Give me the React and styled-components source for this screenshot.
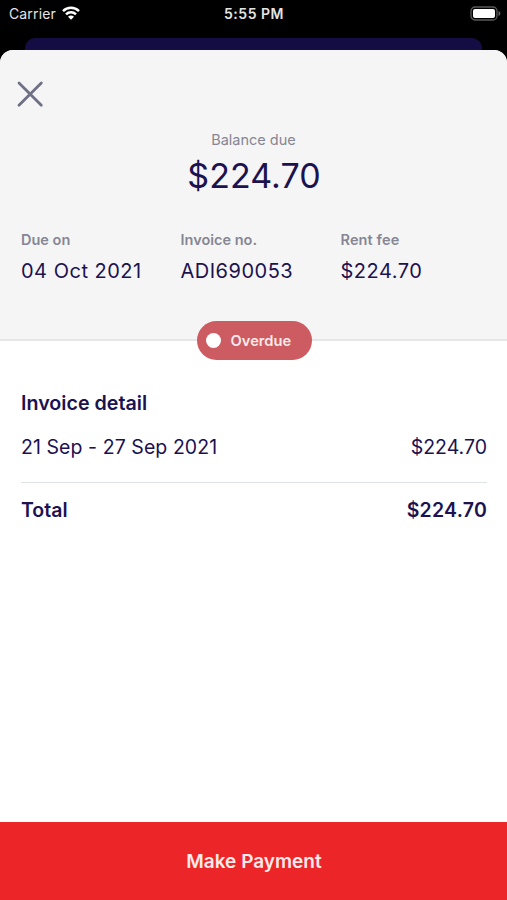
import React from "react";
import styled, { createGlobalStyle } from "styled-components";

const GlobalStyle = createGlobalStyle`
  * { box-sizing: border-box; }
  body {
    margin: 0;
    background: #000;
    font-family: Inter, "Liberation Sans", sans-serif;
    color: #1c1250;
  }
`;

const Screen = styled.div`
  display: flex;
  flex-direction: column;
  width: 507px;
  height: 900px;
  overflow: hidden;
  background: #000;
`;

const StatusBar = styled.header`
  display: grid;
  grid-template-columns: 1fr auto 1fr;
  align-items: center;
  height: 28px;
  padding: 0 6px 0 9px;
  font-size: 14px;
  line-height: 28px;
  color: #e4e4e4;
`;

const Carrier = styled.div`
  display: flex;
  align-items: center;
  gap: 6px;
  letter-spacing: 0.14px;

  svg {
    margin-top: -2px;
  }
`;

const Clock = styled.div`
  margin-right: 2px;
  font-weight: 600;
  letter-spacing: 0.5px;
`;

const Battery = styled.svg`
  justify-self: end;
  margin-top: -2px;
`;

const BackSheet = styled.div`
  flex: none;
  height: 12px;
  margin: 10px 25px 0;
  border-radius: 10px 10px 0 0;
  background: #140d44;
`;

const Sheet = styled.main`
  display: flex;
  flex: 1;
  flex-direction: column;
  overflow: hidden;
  border-radius: 13px 13px 0 0;
  background: #fff;
`;

const Summary = styled.section`
  display: flex;
  flex: none;
  flex-direction: column;
  height: 291px;
  background: #f5f5f5;
  border-bottom: 2px solid #e6e6e8;
`;

const CloseButton = styled.button`
  display: flex;
  width: 28px;
  height: 28px;
  margin: 30px 0 0 16px;
  padding: 0;
  border: 0;
  background: none;
`;

const Balance = styled.div`
  display: flex;
  flex-direction: column;
  align-items: center;
  margin-top: 22px;
`;

const Label = styled.div`
  font-size: 14.5px;
  line-height: 20px;
  font-weight: ${(p) => (p.$strong ? 600 : 400)};
  letter-spacing: ${(p) => p.$track || "0"};
  color: #868694;
`;

const Amount = styled.div`
  margin: 4px 0 0 1px;
  font-size: 34px;
  line-height: 44px;
  letter-spacing: 0.05px;
`;

const Facts = styled.div`
  display: grid;
  grid-template-columns: 159.5px 160px 1fr;
  margin: 32px 0 0 21px;
`;

const FactValue = styled.div`
  margin-top: 7px;
  font-size: 20px;
  line-height: 28px;
  letter-spacing: 0.5px;
`;

const Pill = styled.div`
  display: flex;
  flex: none;
  align-self: center;
  align-items: center;
  gap: 10px;
  width: 115px;
  height: 39px;
  margin: -20px 0 0 1px;
  padding-left: 9px;
  border-radius: 20px;
  background: #cc5c62;
  color: #fce9e9;
  font-size: 14.7px;
  font-weight: 600;
`;

const Dot = styled.span`
  width: 15px;
  height: 15px;
  border-radius: 50%;
  background: #fff;
`;

const Detail = styled.section`
  flex: 1;
  padding: 29px 20px 0 21px;
`;

const Heading = styled.h2`
  margin: 0;
  font-size: 19.7px;
  line-height: 28px;
  font-weight: 600;
`;

const Row = styled.div`
  display: flex;
  justify-content: space-between;
  font-size: 19.5px;
  line-height: 28px;
  font-weight: ${(p) => (p.$total ? 600 : 400)};
  margin-top: ${(p) => (p.$total ? "13px" : "16px")};
`;

const Cell = styled.span`
  letter-spacing: ${(p) => p.$track || "0"};
`;

const Divider = styled.hr`
  height: 1px;
  margin: 21px 0 0;
  border: 0;
  background: #dfe2e6;
`;

const PayButton = styled.button`
  flex: none;
  height: 78px;
  padding: 1px 0 0 1px;
  border: 0;
  background: #ec2529;
  color: #fdeaea;
  font: 600 19px/77px Inter, "Liberation Sans", sans-serif;
`;

export default function App() {
  return (
    <Screen>
      <GlobalStyle />
      <StatusBar>
        <Carrier>
          Carrier
          <svg width="18" height="14" viewBox="0 0 18 14" fill="none" stroke="#fff" strokeWidth="2.5">
            <path d="M1 5.1C5.4.7 12.6.7 17 5.1" />
            <path d="M4 8.3C6.8 5.5 11.2 5.5 14 8.3" />
            <path d="M9 13.7 6 10.7C7.7 9.1 10.3 9.1 12 10.7Z" fill="#fff" stroke="none" />
          </svg>
        </Carrier>
        <Clock>5:55 PM</Clock>
        <Battery width="31" height="15" viewBox="0 0 31 15">
          <rect x="1" y="1" width="26" height="13" rx="4" fill="#000" stroke="#5a5a5a" strokeWidth="1.3" />
          <rect x="3" y="3" width="22" height="9" rx="2" fill="#fff" />
          <path d="M28.5 5C31 6 31 9 28.5 10Z" fill="#666" />
        </Battery>
      </StatusBar>
      <BackSheet />
      <Sheet>
        <Summary>
          <CloseButton aria-label="Close">
            <svg width="28" height="28" viewBox="0 0 28 28" stroke="#6f7086" strokeWidth="2.8" strokeLinecap="round">
              <path d="M3 3 25.3 25.3M25.3 3 3 25.3" />
            </svg>
          </CloseButton>
          <Balance>
            <Label>Balance due</Label>
            <Amount>$224.70</Amount>
          </Balance>
          <Facts>
            <div>
              <Label $strong>Due on</Label>
              <FactValue>04 Oct 2021</FactValue>
            </div>
            <div>
              <Label $strong>Invoice no.</Label>
              <FactValue>ADI690053</FactValue>
            </div>
            <div>
              <Label $strong $track="0.12px">Rent fee</Label>
              <FactValue>$224.70</FactValue>
            </div>
          </Facts>
        </Summary>
        <Pill>
          <Dot />
          Overdue
        </Pill>
        <Detail>
          <Heading>Invoice detail</Heading>
          <Row>
            <Cell $track="0.07px">21 Sep - 27 Sep 2021</Cell>
            <Cell>$224.70</Cell>
          </Row>
          <Divider />
          <Row $total>
            <Cell>Total</Cell>
            <Cell $track="0.25px">$224.70</Cell>
          </Row>
        </Detail>
        <PayButton>Make Payment</PayButton>
      </Sheet>
    </Screen>
  );
}
